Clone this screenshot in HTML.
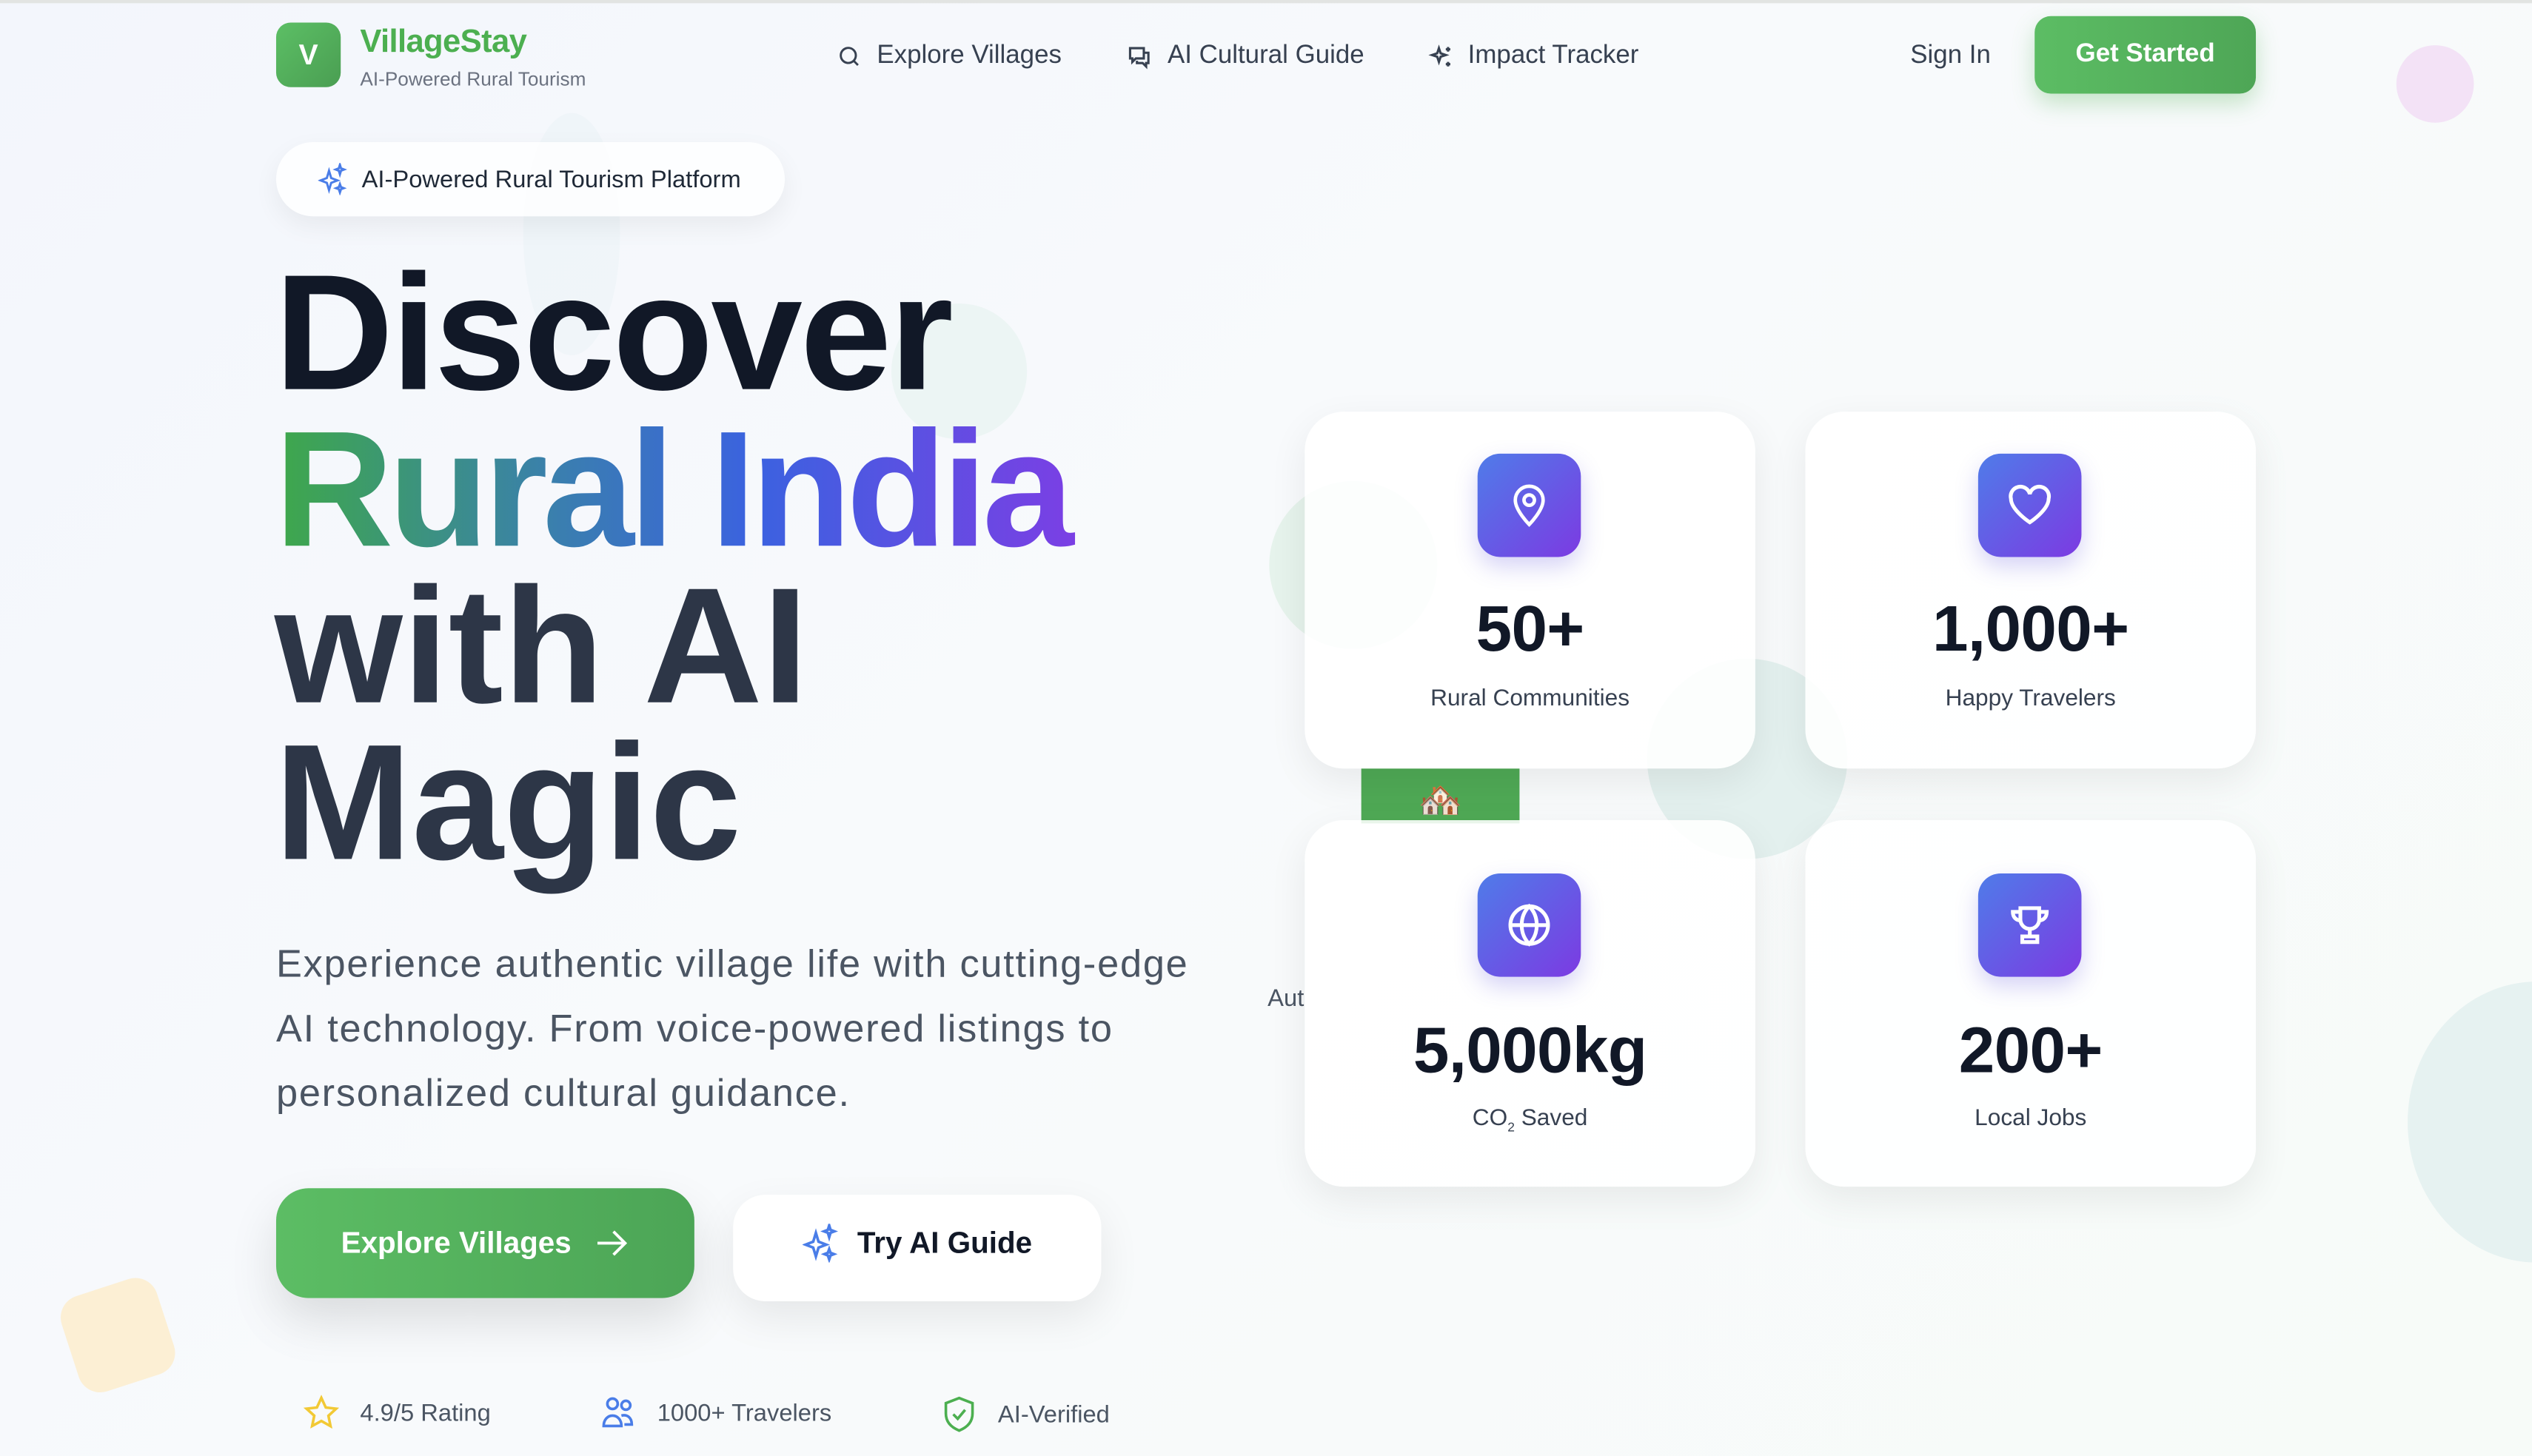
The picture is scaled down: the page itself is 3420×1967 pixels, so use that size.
<!DOCTYPE html>
<html><head><meta charset="utf-8"><style>
*{margin:0;padding:0;box-sizing:border-box}
html,body{width:3420px;height:1966px;overflow:hidden;background:#f7f9fc}
#w{position:absolute;left:0;top:0;width:1568px;height:902px;transform:scale(2.18112);transform-origin:0 0;font-family:"Liberation Sans",sans-serif;background:linear-gradient(135deg,#f3f6fc 0%,#f8fafc 45%,#f7fbf8 100%);overflow:hidden}
.a{position:absolute}
.nav{font-size:16px;color:#374151;top:26px;display:flex;align-items:center;gap:8px}
.circ{position:absolute;border-radius:50%}
.card{position:absolute;width:279px;height:221px;border-radius:24px;background:rgba(255,255,255,.88);box-shadow:0 8px 24px rgba(0,0,0,.07);text-align:center}
.ib{position:absolute;left:107px;top:26px;width:64px;height:64px;border-radius:14px;background:linear-gradient(135deg,#4f7ce9,#7c3ae2);box-shadow:0 6px 14px rgba(90,80,220,.25);display:flex;align-items:center;justify-content:center}
.num{position:absolute;left:0;right:0;top:113px;font-size:40px;font-weight:bold;color:#111827;letter-spacing:-0.3px}
.lab{position:absolute;left:0;right:0;top:170px;font-size:14.5px;color:#374151}
.st{position:absolute;top:864px;font-size:15px;color:#4b5563;display:flex;align-items:center;gap:10px}
</style></head><body><div id="w">
<div class="a" style="left:0;top:0;width:1568px;height:2px;background:#e2e4e2"></div>
<div class="circ" style="left:1484px;top:28px;width:48px;height:48px;background:#f3e2f6"></div>
<div class="circ" style="left:324px;top:70px;width:60px;height:150px;background:#e6f1f4;opacity:.35"></div>
<div class="circ" style="left:552px;top:188px;width:84px;height:84px;background:#e9f4f1;opacity:.8"></div>
<div class="circ" style="left:786px;top:298px;width:104px;height:104px;background:#e6f3ec"></div>
<div class="circ" style="left:1020px;top:408px;width:124px;height:124px;background:#e3f0ee"></div>
<div class="circ" style="left:1491px;top:608px;width:160px;height:174px;background:#e6f2f1"></div>
<div class="a" style="left:42px;top:796px;width:62px;height:62px;border-radius:14px;background:#fcefd4;transform:rotate(-18deg)"></div>
<div class="a" style="left:843px;top:476px;width:98px;height:34px;background:#4fa955;text-align:center;font-size:22px;line-height:40px;overflow:hidden">🏘️</div>
<div class="a" style="left:785px;top:610px;font-size:15px;color:#4b5563">Aut</div>

<div class="a" style="left:171px;top:14px;width:40px;height:40px;border-radius:9px;background:linear-gradient(135deg,#5cbf65,#4a9e52);color:#fff;font-size:18px;font-weight:bold;text-align:center;line-height:40px">V</div>
<div class="a" style="left:223px;top:15px;font-size:20px;font-weight:bold;color:#4caf50;letter-spacing:-0.3px">VillageStay</div>
<div class="a" style="left:223px;top:42px;font-size:12px;color:#6b7280">AI-Powered Rural Tourism</div>
<div class="a nav" style="left:518px"><svg width="16" height="16" viewBox="0 0 24 24" fill="none" stroke="#374151" stroke-width="2"><circle cx="11" cy="11" r="7"/><path d="M20 20l-4-4"/></svg><span style="margin-left:1px">Explore Villages</span></div>
<div class="a nav" style="left:697px"><svg width="17" height="17" viewBox="0 0 24 24" fill="none" stroke="#374151" stroke-width="2"><path d="M4 4h12v9H9l-3 3v-3H4z"/><path d="M16 8h4v9h-2v3l-3-3h-5v-2"/></svg><span style="margin-left:1px">AI Cultural Guide</span></div>
<div class="a nav" style="left:884px"><svg width="17" height="17" viewBox="0 0 24 24" fill="none" stroke="#374151" stroke-width="2"><path d="M10 4l1.5 4.5L16 10l-4.5 1.5L10 16l-1.5-4.5L4 10l4.5-1.5z"/><path d="M18 3v4M16 5h4M18 16v4M16 18h4"/></svg><span>Impact Tracker</span></div>
<div class="a" style="left:1183px;top:26px;font-size:16px;color:#374151">Sign In</div>
<div class="a" style="left:1260px;top:10px;width:137px;height:48px;border-radius:10px;background:linear-gradient(90deg,#5cbd64,#4ea656);color:#fff;font-size:16px;font-weight:bold;text-align:center;line-height:48px;box-shadow:0 6px 14px rgba(76,175,80,.3)">Get Started</div>

<div class="a" style="left:171px;top:88px;width:315px;height:46px;border-radius:23px;background:rgba(255,255,255,.8);box-shadow:0 6px 16px rgba(0,0,0,.06);display:flex;align-items:center;padding-left:26px;gap:9px;font-size:15px;color:#1f2937"><svg width="18" height="20" viewBox="0 0 24 26" fill="none" stroke="#4a7de8" stroke-width="1.8"><path d="M9 6l1.8 6 5.2 2-5.2 2L9 22l-1.8-6L2 14l5.2-2z"/><path d="M18 1l.9 3 2.6 1-2.6 1-.9 3-.9-3-2.6-1 2.6-1zM18 17l.9 2.5 2.3.9-2.3.9L18 24l-.9-2.7-2.3-.9 2.3-.9z"/></svg>AI-Powered Rural Tourism Platform</div>

<div class="a" style="left:170px;top:158px;font-size:102px;font-weight:bold;letter-spacing:-1.5px;line-height:97px;white-space:nowrap;width:700px">
<div style="color:#111827">Discover</div>
<div><span style="display:inline-block;letter-spacing:-3.2px;background:linear-gradient(90deg,#3ea84a 0%,#3a7fae 35%,#3b62e0 60%,#7b3fe4 100%);-webkit-background-clip:text;background-clip:text;color:transparent;padding-right:4px">Rural India</span></div>
<div style="color:#2d3647;letter-spacing:0">with AI</div>
<div style="color:#2d3647;letter-spacing:0">Magic</div>
</div>

<div class="a" style="left:171px;top:578px;width:590px;font-size:24px;line-height:40px;color:#4b5563;letter-spacing:0.8px">Experience authentic village life with cutting-edge AI technology. From voice-powered listings to personalized cultural guidance.</div>

<div class="a" style="left:171px;top:736px;width:259px;height:68px;border-radius:20px;background:linear-gradient(90deg,#5cbd64,#4ca556);box-shadow:0 14px 30px rgba(0,0,0,.12);color:#fff;font-size:18.5px;font-weight:bold;display:flex;align-items:center;justify-content:center;gap:14px">Explore Villages<svg width="22" height="18" viewBox="0 0 24 20" fill="none" stroke="#fff" stroke-width="2"><path d="M2 10h19M13 2l8 8-8 8"/></svg></div>
<div class="a" style="left:454px;top:740px;width:228px;height:66px;border-radius:20px;background:#fff;box-shadow:0 10px 26px rgba(0,0,0,.08);color:#111827;font-size:18.5px;font-weight:bold;display:flex;align-items:center;justify-content:center;gap:12px;padding-bottom:6px"><svg width="22" height="24" viewBox="0 0 24 26" fill="none" stroke="#4a7de8" stroke-width="1.8"><path d="M9 6l1.8 6 5.2 2-5.2 2L9 22l-1.8-6L2 14l5.2-2z"/><path d="M18 1l.9 3 2.6 1-2.6 1-.9 3-.9-3-2.6-1 2.6-1zM18 17l.9 2.5 2.3.9-2.3.9L18 24l-.9-2.7-2.3-.9 2.3-.9z"/></svg>Try AI Guide</div>

<div class="st" style="left:188px"><svg width="22" height="22" viewBox="0 0 24 24" fill="none" stroke="#f2c935" stroke-width="1.8"><path d="M12 2l3 6.5 7 .8-5.2 4.8 1.4 7L12 17.6 5.8 21l1.4-7L2 9.3l7-.8z"/></svg><span style="margin-left:3px">4.9/5 Rating</span></div>
<div class="st" style="left:371px"><svg width="24" height="22" viewBox="0 0 24 24" fill="none" stroke="#4a7de8" stroke-width="1.8"><circle cx="8" cy="6" r="3.5"/><circle cx="17" cy="7" r="3"/><path d="M2 21c0-4 2.5-7 6-7s6 3 6 7zM14 14c3.5-1 7 1 7 6h-5"/></svg><span style="margin-left:2px">1000+ Travelers</span></div>
<div class="st" style="left:583px"><svg width="22" height="24" viewBox="0 0 24 26" fill="none" stroke="#4caf50" stroke-width="1.8"><path d="M12 2l9 3.5v7c0 6-4 9.5-9 11.5-5-2-9-5.5-9-11.5v-7z"/><path d="M8 13l3 3 5-6"/></svg><span style="margin-left:3px">AI-Verified</span></div>

<div class="card" style="left:808px;top:255px"><div class="ib"><svg width="26" height="28" viewBox="0 0 24 26" fill="none" stroke="#fff" stroke-width="2"><path d="M12 24s-8-8-8-14a8 8 0 0 1 16 0c0 6-8 14-8 14z"/><circle cx="12" cy="10" r="3"/></svg></div><div class="num">50+</div><div class="lab">Rural Communities</div></div>
<div class="card" style="left:1118px;top:255px"><div class="ib"><svg width="28" height="26" viewBox="0 0 24 22" fill="none" stroke="#fff" stroke-width="2"><path d="M12 20S2 13.5 2 7.5A5 5 0 0 1 12 5a5 5 0 0 1 10 2.5C22 13.5 12 20 12 20z"/></svg></div><div class="num">1,000+</div><div class="lab">Happy Travelers</div></div>
<div class="card" style="left:808px;top:508px;height:227px"><div class="ib" style="top:33px"><svg width="28" height="28" viewBox="0 0 24 24" fill="none" stroke="#fff" stroke-width="2"><circle cx="12" cy="12" r="10"/><path d="M2 12h20M12 2c3 3 4 6.5 4 10s-1 7-4 10c-3-3-4-6.5-4-10s1-7 4-10z"/></svg></div><div class="num" style="top:121px">5,000kg</div><div class="lab" style="top:177px">CO<sub style="font-size:8px">2</sub> Saved</div></div>
<div class="card" style="left:1118px;top:508px;height:227px"><div class="ib" style="top:33px"><svg width="28" height="28" viewBox="0 0 24 24" fill="none" stroke="#fff" stroke-width="2"><path d="M7 3h10v6a5 5 0 0 1-10 0z"/><path d="M7 5H3c0 3 2 4.5 4 4.5M17 5h4c0 3-2 4.5-4 4.5M12 14v4M8 18h8v3H8z"/></svg></div><div class="num" style="top:121px">200+</div><div class="lab" style="top:177px">Local Jobs</div></div>
</div></body></html>
